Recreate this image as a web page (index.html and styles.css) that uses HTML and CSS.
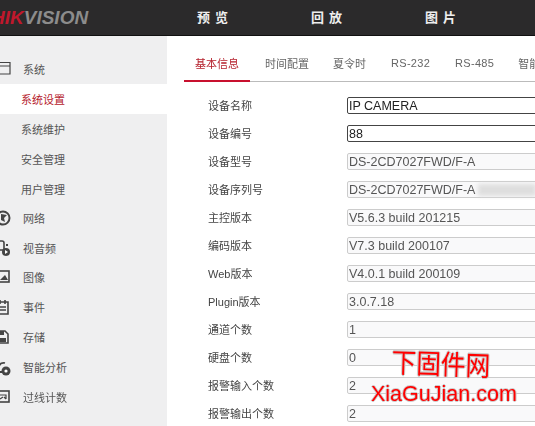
FILE: index.html
```html
<!DOCTYPE HTML>
<html lang="zh-CN">

<head>
  <meta charset="UTF-8">
  <title>设备信息</title>
  <link rel="stylesheet" href="styles.css">
</head>

<body>
  <div class="header">
    <div class="logo"><span class="logo-red">HIK</span>VISION</div>
    <div class="nav">
      <a href="#">预览</a>
      <a href="#">回放</a>
      <a href="#">图片</a>
    </div>
  </div>

  <div class="main">
    <div class="sidebar">
      <div class="menu-group">
        <svg class="icon" viewBox="0 0 20 20"><path d="M-2 3.5H10V15H-2ZM-2 7H10" fill="none" stroke="#444" stroke-width="1.2"/></svg>
        <span>系统</span>
      </div>
      <div class="menu-sub active">系统设置</div>
      <div class="menu-sub">系统维护</div>
      <div class="menu-sub">安全管理</div>
      <div class="menu-sub">用户管理</div>
      <div class="menu-group">
        <svg class="icon" viewBox="0 0 20 20"><circle cx="3" cy="10" r="6.5" fill="none" stroke="#444" stroke-width="2"/><path d="M1 6L7 7L4 10L5 14L1 12Z" fill="#444"/></svg>
        <span>网络</span>
      </div>
      <div class="menu-group">
        <svg class="icon" viewBox="0 0 20 20"><path d="M-1 3H2Q4 3 4 5V12H-1" fill="none" stroke="#444" stroke-width="1.6"/><circle cx="6" cy="14" r="4" fill="#444"/><path d="M5 12L8 14L5 16Z" fill="#fff"/><rect x="6" y="6" width="2" height="2" fill="#444"/></svg>
        <span>视音频</span>
      </div>
      <div class="menu-group">
        <svg class="icon" viewBox="0 0 20 20"><rect x="-2" y="4" width="11" height="11" fill="none" stroke="#444" stroke-width="1.6"/><path d="M0 13L5 8L8 13Z" fill="#444"/></svg>
        <span>图像</span>
      </div>
      <div class="menu-group">
        <svg class="icon" viewBox="0 0 20 20"><path d="M-2 5H8V17H-2ZM0 3V7M5 3V7M0 10H6M0 13H6" fill="none" stroke="#444" stroke-width="1.6"/></svg>
        <span>事件</span>
      </div>
      <div class="menu-group">
        <svg class="icon" viewBox="0 0 20 20"><path d="M-2 4H5L8 7V16H-2Z" fill="none" stroke="#444" stroke-width="1.6"/><rect x="0" y="4" width="4" height="4" fill="#444"/><rect x="0" y="11" width="6" height="4" fill="#444"/></svg>
        <span>存储</span>
      </div>
      <div class="menu-group">
        <svg class="icon" viewBox="0 0 20 20"><path d="M-1 9A5 5 0 0 1 5 6M-1 9V15H3" fill="none" stroke="#444" stroke-width="1.8"/><circle cx="6" cy="14" r="4.5" fill="#444"/><circle cx="6" cy="14" r="1.6" fill="#fff"/></svg>
        <span>智能分析</span>
      </div>
      <div class="menu-group">
        <svg class="icon" viewBox="0 0 20 20"><rect x="-2" y="4" width="11" height="11" fill="none" stroke="#444" stroke-width="1.6"/><path d="M0 8H6V12M6 12L4 10M0 12L3 10" fill="none" stroke="#444" stroke-width="1.2"/></svg>
        <span>过线计数</span>
      </div>
    </div>

    <div class="content">
      <div class="tabs">
        <a href="#" class="tab active">基本信息</a>
        <a href="#" class="tab">时间配置</a>
        <a href="#" class="tab">夏令时</a>
        <a href="#" class="tab tab-en">RS-232</a>
        <a href="#" class="tab tab-en">RS-485</a>
        <a href="#" class="tab">智能</a>
      </div>

      <div class="form">
        <div class="row"><label>设备名称</label><div class="field edit">IP CAMERA</div></div>
        <div class="row"><label>设备编号</label><div class="field edit">88</div></div>
        <div class="row"><label>设备型号</label><div class="field">DS-2CD7027FWD/F-A</div></div>
        <div class="row"><label>设备序列号</label><div class="field">DS-2CD7027FWD/F-A<span class="blur"></span></div></div>
        <div class="row"><label>主控版本</label><div class="field">V5.6.3 build 201215</div></div>
        <div class="row"><label>编码版本</label><div class="field">V7.3 build 200107</div></div>
        <div class="row"><label>Web版本</label><div class="field">V4.0.1 build 200109</div></div>
        <div class="row"><label>Plugin版本</label><div class="field">3.0.7.18</div></div>
        <div class="row"><label>通道个数</label><div class="field">1</div></div>
        <div class="row"><label>硬盘个数</label><div class="field">0</div></div>
        <div class="row"><label>报警输入个数</label><div class="field">2</div></div>
        <div class="row"><label>报警输出个数</label><div class="field">2</div></div>
      </div>
    </div>
  </div>

  <!-- 水印 -->
  <div class="watermark">
    <div class="wm-cn">下固件网</div>
    <div class="wm-en">XiaGuJian.com</div>
  </div>
</body>

</html>
```

FILE: styles.css
```css
* {
  box-sizing: border-box;
  margin: 0;
  padding: 0;
}

body {
  width: 535px;
  height: 426px;
  overflow: hidden;
  background-color: white;
  font-family: "Liberation Sans", "Noto Sans CJK SC", sans-serif;
  font-size: 11px;
  color: #444;
  position: relative;
  filter: blur(0.3px);
}

.header {
  height: 36px;
  background-color: #2b2a2b;
  border-bottom: 1px solid #111;
  display: flex;
  align-items: center;
  overflow: hidden;
}

.logo {
  width: 206px;
  margin-left: -9px;
  flex-shrink: 0;
  font-size: 19px;
  font-weight: bold;
  font-style: italic;
  color: #8c8c8c;
}

.logo-red {
  color: #c0182c;
}

.nav {
  display: flex;
  padding-bottom: 2px;
}

.nav a {
  width: 114px;
  color: #eee;
  font-size: 13px;
  font-weight: bold;
  letter-spacing: 5px;
  text-decoration: none;
}

.main {
  display: flex;
  height: 390px;
}

.sidebar {
  width: 167px;
  flex-shrink: 0;
  background-color: #efeff0;
  padding-top: 18px;
}

.menu-group {
  height: 29.8px;
  display: flex;
  align-items: center;
  color: #555;
}

.menu-group .icon {
  width: 20px;
  height: 20px;
  margin-right: 3px;
  flex-shrink: 0;
}

.menu-sub {
  height: 29.8px;
  display: flex;
  align-items: center;
  padding: 1px 0 0 21px;
  color: #555;
}

.menu-sub.active {
  background-color: white;
  color: #b5202c;
}

.content {
  flex: 1;
  min-width: 0;
  padding-left: 17px;
  overflow: hidden;
}

.tabs {
  height: 46px;
  border-bottom: 1px solid #bbb;
  display: flex;
  white-space: nowrap;
}

.tab {
  height: 46px;
  padding: 19px 12px 0;
  color: #666;
  text-decoration: none;
  flex-shrink: 0;
}

.tab.active {
  color: #b5202c;
  border-bottom: 2px solid #c8102e;
  padding: 19px 11px 0;
  margin-right: 3px;
}

.tab-en {
  padding-top: 21px;
  margin-left: 1px;
  letter-spacing: 0.3px;
}

.form {
  padding-top: 9px;
  padding-left: 24px;
}

.row {
  height: 28px;
  display: flex;
  align-items: center;
}

.row label {
  width: 139px;
  flex-shrink: 0;
}

.field {
  flex: 1;
  height: 17px;
  margin-right: -30px;
  border: 1px solid #ccc;
  border-radius: 2px;
  background-color: #f9f9fa;
  color: #555;
  font-size: 12.5px;
  line-height: 16px;
  padding-left: 1px;
  white-space: nowrap;
}

.field.edit {
  background-color: white;
  border-color: #444;
  color: #222;
}

.blur {
  display: inline-block;
  width: 58px;
  height: 12px;
  margin-left: 3px;
  vertical-align: middle;
  background-color: #dedede;
  filter: blur(2px);
}

.watermark {
  position: absolute;
  left: 371px;
  top: 349px;
  text-align: center;
  color: #f00;
  text-shadow: -1px 0 #ccc, 1px 0 #ccc, 0 -1px #ccc, 0 1px #ccc;
}

.wm-cn {
  font-size: 24px;
  line-height: 32px;
  transform: translateX(-3px) scale(1.03, 1.15) rotate(2deg);
}

.wm-en {
  font-size: 21.5px;
  line-height: 26px;
}
```
